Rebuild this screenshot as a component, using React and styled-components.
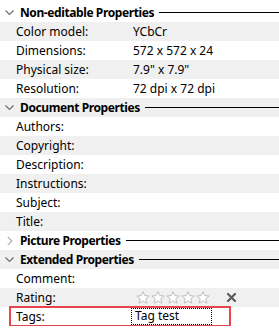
import React from "react";
import styled, { createGlobalStyle } from "styled-components";

const Global = createGlobalStyle`
  html, body { margin: 0; padding: 0; background: #fff; }
  body { font-family: "Noto Sans", "Open Sans", sans-serif; font-size: 12px; color: #000; }
`;

const Panel = styled.div`
  width: 279px;
  padding-top: 3px;
  position: relative;
`;

const RowBase = styled.div`
  height: 19px;
  display: flex;
  align-items: center;
  background: ${(p) => (p.$alt ? "#f0f0f0" : "#fff")};
  position: relative;
`;

const Chevron = styled.span`
  width: 20px;
  height: 19px;
  display: flex;
  align-items: center;
  justify-content: center;
  flex: none;
  padding-right: 1px;
  box-sizing: border-box;
`;

const HeaderTitle = styled.span`
  font-weight: 700;
  white-space: nowrap;
  line-height: 19px;
  letter-spacing: -0.4px;
`;

const HeaderLine = styled.span`
  flex: 1;
  height: 1px;
  background: #000;
  margin-left: 5px;
  margin-top: -1px;
`;

const Label = styled.span`
  width: 117px;
  padding-left: 16px;
  flex: none;
  white-space: nowrap;
  line-height: 19px;
`;

const Value = styled.span`
  white-space: nowrap;
  line-height: 19px;
  display: flex;
  align-items: center;
`;

const Stars = styled.span`
  display: flex;
  gap: 1px;
  margin-left: 3px;
`;

const Clear = styled.span`
  margin-left: 17px;
  display: flex;
`;

const FocusText = styled.span`
  display: inline-block;
  width: 79px;
  height: 15px;
  line-height: 14px;
  box-sizing: border-box;
  outline: 1px dotted #000;
  outline-offset: 0;
  padding-left: 3px;
  margin-left: -1px;
`;

const Highlight = styled.div`
  position: absolute;
  left: 9px;
  width: 222px;
  top: -1px;
  height: 21px;
  border: 2px solid #e8444c;
  box-sizing: border-box;
  pointer-events: none;
`;

const Down = () => (
  <svg width="9" height="6" viewBox="0 0 9 6">
    <path d="M0.5 0.5 L4.5 4.5 L8.5 0.5" fill="none" stroke="#6e6e6e" strokeWidth="1.2" />
  </svg>
);

const Right = () => (
  <svg width="6" height="10" viewBox="0 0 6 10">
    <path d="M0.8 0.8 L4.8 5 L0.8 9.2" fill="none" stroke="#b0b0b0" strokeWidth="1.2" />
  </svg>
);

const Star = () => (
  <svg width="14" height="13" viewBox="0 0 14 13">
    <path
      d="M7 0.7 L8.8 4.6 L13.1 5 L9.8 7.8 L10.8 12.2 L7 9.9 L3.2 12.2 L4.2 7.8 L0.9 5 L5.2 4.6 Z"
      fill="#fff"
      stroke="#bdbdbd"
      strokeWidth="1"
      strokeLinejoin="round"
    />
  </svg>
);

const XIcon = () => (
  <svg width="9" height="9" viewBox="0 0 9 9">
    <path d="M1 1 L8 8 M8 1 L1 8" stroke="#5a5a5a" strokeWidth="2.2" strokeLinecap="square" />
  </svg>
);

const Header = ({ title, open, alt }) => (
  <RowBase $alt={alt}>
    <Chevron>{open ? <Down /> : <Right />}</Chevron>
    <HeaderTitle>{title}</HeaderTitle>
    <HeaderLine />
  </RowBase>
);

const Prop = ({ label, value, alt, children }) => (
  <RowBase $alt={alt}>
    <Label>{label}</Label>
    <Value>{children ?? value}</Value>
  </RowBase>
);

const rows = [
  { h: "Non-editable Properties", open: true },
  { l: "Color model:", v: "YCbCr" },
  { l: "Dimensions:", v: "572 x 572 x 24" },
  { l: "Physical size:", v: '7.9" x 7.9"' },
  { l: "Resolution:", v: "72 dpi x 72 dpi" },
  { h: "Document Properties", open: true },
  { l: "Authors:" },
  { l: "Copyright:" },
  { l: "Description:" },
  { l: "Instructions:" },
  { l: "Subject:" },
  { l: "Title:" },
  { h: "Picture Properties", open: false },
  { h: "Extended Properties", open: true },
  { l: "Comment:" },
  { l: "Rating:", rating: true },
  { l: "Tags:", tags: true },
];

export default function App() {
  return (
    <>
      <Global />
      <Panel>
        {rows.map((r, i) => {
          const alt = i % 2 === 1;
          if (r.h) return <Header key={i} title={r.h} open={r.open} alt={alt} />;
          if (r.rating)
            return (
              <Prop key={i} label={r.l} alt={alt}>
                <Stars>
                  {[0, 1, 2, 3, 4].map((s) => (
                    <Star key={s} />
                  ))}
                </Stars>
                <Clear>
                  <XIcon />
                </Clear>
              </Prop>
            );
          if (r.tags)
            return (
              <RowBase key={i} $alt={alt}>
                <Label>{r.l}</Label>
                <Value>
                  <FocusText>Tag test</FocusText>
                </Value>
                <Highlight />
              </RowBase>
            );
          return <Prop key={i} label={r.l} value={r.v} alt={alt} />;
        })}
      </Panel>
    </>
  );
}
